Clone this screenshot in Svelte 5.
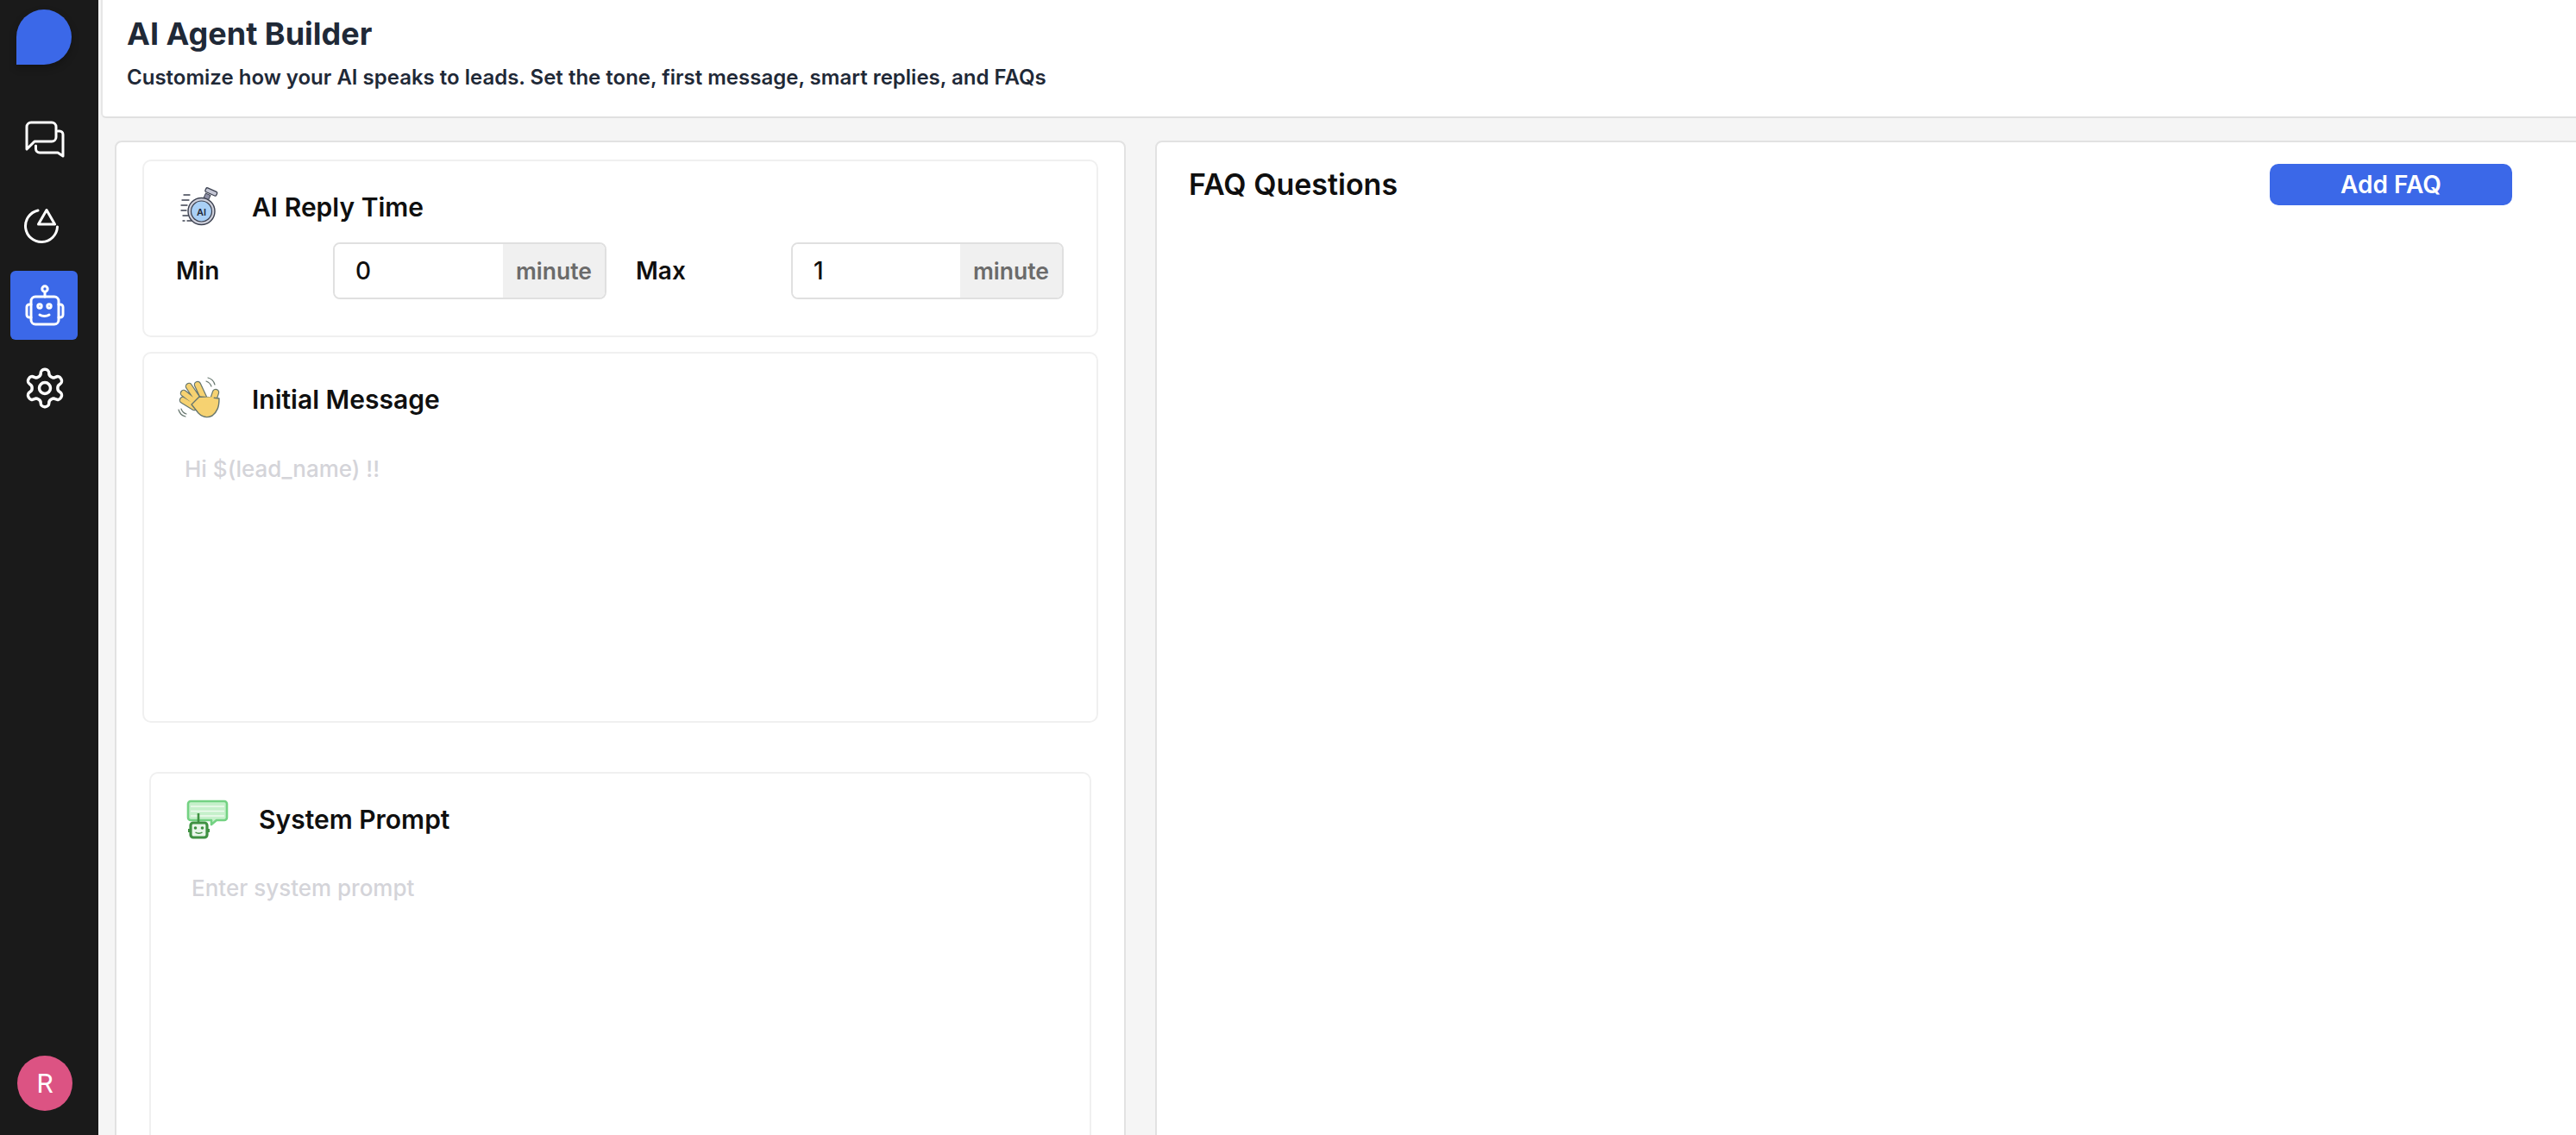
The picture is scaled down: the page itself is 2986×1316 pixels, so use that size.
<script lang="ts">
  let minReply = $state(0)
  let maxReply = $state(1)
  let initialMessage = $state('')
  let systemPrompt = $state('')
</script>

<div class="shell">
  <aside class="sidebar">
    <div class="logo"></div>

    <nav>
      <a class="nav-item" href="#chats" aria-label="Chats">
        <svg viewBox="0 0 56 60" width="56" height="60" class="thick">
          <path d="M7 41V15a5 5 0 0 1 5-5H36a5 5 0 0 1 5 5V27a5 5 0 0 1-5 5H16Z" />
          <path d="M43 20h2a4 4 0 0 1 4 4V49L43 45H22a4.500 4.500 0 0 1-4.500-4.500V37" />
        </svg>
      </a>
      <a class="nav-item" href="#stats" aria-label="Statistics">
        <svg viewBox="0 0 56 60" width="56" height="60" class="thick">
          <path d="M20 16A18.500 18.500 0 1 0 42.500 35" />
          <path d="M30 15.500L39.500 32H20.500Z" />
        </svg>
      </a>
      <a class="nav-item active" href="#agent" aria-label="AI agent">
        <svg viewBox="0 0 56 60" width="56" height="60" class="thick">
          <circle cx="28" cy="11" r="3.200" />
          <path d="M28 14.500V20" />
          <rect x="12" y="20" width="32" height="32" rx="5" />
          <path d="M12 29H10a3 3 0 0 0-3 3v9a3 3 0 0 0 3 3h2" />
          <path d="M44 29h2a3 3 0 0 1 3 3v9a3 3 0 0 1-3 3h-2" />
          <circle cx="22" cy="31" r="2.200" />
          <circle cx="33" cy="31" r="2.200" />
          <path d="M22 41c3 2 8 2 11 0" />
        </svg>
      </a>
      <a class="nav-item" href="#settings" aria-label="Settings">
        <svg viewBox="0 0 24 24" width="52" height="52">
          <path d="M12.22 2h-.44a2 2 0 0 0-2 2v.18a2 2 0 0 1-1 1.73l-.43.25a2 2 0 0 1-2 0l-.15-.08a2 2 0 0 0-2.73.73l-.22.38a2 2 0 0 0 .73 2.73l.15.1a2 2 0 0 1 1 1.72v.51a2 2 0 0 1-1 1.74l-.15.09a2 2 0 0 0-.73 2.73l.22.38a2 2 0 0 0 2.73.73l.15-.08a2 2 0 0 1 2 0l.43.25a2 2 0 0 1 1 1.73V20a2 2 0 0 0 2 2h.44a2 2 0 0 0 2-2v-.18a2 2 0 0 1 1-1.73l.43-.25a2 2 0 0 1 2 0l.15.08a2 2 0 0 0 2.73-.73l.22-.39a2 2 0 0 0-.73-2.73l-.15-.08a2 2 0 0 1-1-1.74v-.5a2 2 0 0 1 1-1.74l.15-.09a2 2 0 0 0 .73-2.73l-.22-.38a2 2 0 0 0-2.73-.73l-.15.08a2 2 0 0 1-2 0l-.43-.25a2 2 0 0 1-1-1.73V4a2 2 0 0 0-2-2z" />
          <circle cx="12" cy="12" r="3" />
        </svg>
      </a>
    </nav>

    <div class="avatar">R</div>
  </aside>

  <main>
    <header class="page-head">
      <h1>AI Agent Builder</h1>
      <p>Customize how your AI speaks to leads. Set the tone, first message, smart replies, and FAQs</p>
    </header>

    <div class="panels">
      <section class="panel left">
        <div class="card">
          <div class="card-head">
            <svg class="art" viewBox="0 0 64 60" width="64" height="60">
              <g fill="none" stroke="#3c4150" stroke-width="1.3" stroke-linecap="round">
                <path d="M13 16h7M11 22h8M10 28h7M10 34h6M12 40h6M12 46h2M17 46h5" />
              </g>
              <rect x="38" y="10" width="14" height="5" rx="1.500" transform="rotate(24 45 12)" fill="#c4c6d4" stroke="#3c4150" stroke-width="1.300" />
              <rect x="37" y="15" width="6" height="6" transform="rotate(24 40 18)" fill="#8e90a6" stroke="#3c4150" stroke-width="1" />
              <circle cx="33.500" cy="35" r="15.500" fill="#cfd1dc" stroke="#3c4150" stroke-width="1.400" />
              <circle cx="33.500" cy="35" r="12" fill="#a9d0f6" stroke="#3c4150" stroke-width="1.200" />
              <text x="33.500" y="39.500" text-anchor="middle" class="art-text">AI</text>
            </svg>
            <h2>AI Reply Time</h2>
          </div>
          <div class="reply-row">
            <span class="field-label">Min</span>
            <div class="input-group first">
              <input type="number" bind:value={minReply} />
              <span class="addon">minute</span>
            </div>
            <span class="field-label">Max</span>
            <div class="input-group">
              <input type="number" bind:value={maxReply} />
              <span class="addon">minute</span>
            </div>
          </div>
        </div>

        <div class="card message">
          <div class="card-head">
            <svg class="art" viewBox="0 0 64 60" width="64" height="60">
              <g fill="none" stroke-linecap="round">
                <g stroke="#66766e" stroke-width="8.500">
                  <path d="M29 13l7 15M19 15l10 15M13 23l14 11M12 31l13 8" />
                  <path d="M50 22l-4 12" />
                </g>
                <g stroke="#f6d271" stroke-width="6">
                  <path d="M29 13l7 15M19 15l10 15M13 23l14 11M12 31l13 8" />
                  <path d="M50 22l-4 12" />
                </g>
              </g>
              <path d="M22 36l9-9 15 1 8 1c0 10-2 15-8 20-6 3-12 1-16-3z" fill="#f6d271" stroke="#66766e" stroke-width="1.400" stroke-linejoin="round" />
              <path d="M25 38l8-10 15-1-2 9z" fill="#f6d271" />
              <g fill="none" stroke="#66766e" stroke-width="1.200" stroke-linecap="round">
                <path d="M39 9c3 1 5 3 6 6M41 5c4 1 7 4 8 8" />
                <path d="M10 41c1 3 3 5 6 6M7 42c1 4 4 7 8 8" />
              </g>
            </svg>
            <h2>Initial Message</h2>
          </div>
          <textarea placeholder="Hi $(lead_name) !!" bind:value={initialMessage}></textarea>
        </div>

        <div class="card prompt">
          <div class="card-head">
            <svg class="art" viewBox="0 0 64 60" width="64" height="60">
              <path d="M13 9h39a3 3 0 0 1 3 3v16a3 3 0 0 1-3 3H43l-6 5v-5H13a3 3 0 0 1-3-3V12a3 3 0 0 1 3-3z" fill="#c6f0cb" stroke="#74d283" stroke-width="2.600" stroke-linejoin="round" />
              <path d="M13 15h39M13 20.500h39M13 26h39" stroke="#effaf0" stroke-width="1.600" />
              <path d="M22 23v11" stroke="#3f9142" stroke-width="2.600" />
              <rect x="13" y="34" width="19" height="17" rx="3" fill="#e9f6ea" stroke="#3f9142" stroke-width="3.200" />
              <path d="M11 41v4M34 41v4" stroke="#3f9142" stroke-width="2" />
              <circle cx="18.500" cy="40" r="1.800" fill="#3f9142" />
              <circle cx="26.500" cy="40" r="1.800" fill="#3f9142" />
              <path d="M18.500 45c2 1.500 6 1.500 8 0" fill="none" stroke="#3f9142" stroke-width="1.500" />
            </svg>
            <h2>System Prompt</h2>
          </div>
          <textarea placeholder="Enter system prompt" bind:value={systemPrompt}></textarea>
        </div>
      </section>

      <section class="panel right">
        <div class="faq-head">
          <h2>FAQ Questions</h2>
          <button type="button">Add FAQ</button>
        </div>
      </section>
    </div>
  </main>
</div>

<style>
  :global(body) {
    margin: 0;
    background: #f5f5f5;
    font-family: Inter, 'Liberation Sans', sans-serif;
  }

  .shell {
    display: flex;
    height: 100vh;
    overflow: hidden;
    background: #f5f5f5;
  }

  .sidebar {
    display: flex;
    flex: 0 0 114px;
    flex-direction: column;
    box-sizing: border-box;
    padding: 11px 0 28px;
    background: #1a1a1a;
  }

  .logo {
    width: 64px;
    height: 64px;
    margin-left: 19px;
    border-radius: 50% 50% 50% 0;
    background: #3b68e8;
    box-shadow: 0 4px 8px rgba(0, 0, 0, 0.25);
  }

  nav {
    display: flex;
    flex-direction: column;
    gap: 16px;
    margin-top: 47px;
    padding-left: 12px;
  }

  .nav-item {
    display: flex;
    width: 78px;
    height: 80px;
    align-items: center;
    justify-content: center;
    padding-left: 2px;
    box-sizing: border-box;
    border-radius: 6px;
  }

  .nav-item.active {
    background: #3b68e8;
  }

  .nav-item svg {
    fill: none;
    stroke: #fff;
    stroke-width: 1.6;
    stroke-linecap: round;
    stroke-linejoin: round;
  }

  .nav-item svg.thick {
    stroke-width: 3;
  }

  .avatar {
    display: flex;
    width: 64px;
    height: 64px;
    align-items: center;
    justify-content: center;
    margin: auto 0 0 20px;
    border-radius: 50%;
    color: #fff;
    background: #dc5383;
    font-family: Roboto, sans-serif;
    font-size: 31px;
  }

  main {
    display: flex;
    flex: 1;
    flex-direction: column;
    min-width: 0;
  }

  .page-head {
    flex: none;
    box-sizing: border-box;
    height: 137px;
    margin-left: 3px;
    padding: 18px 0 0 28px;
    border-bottom: 2px solid #e0e0e0;
    border-left: 2px solid #e6e6e6;
    border-bottom-left-radius: 6px;
    background: #fff;
  }

  h1 {
    margin: 0;
    color: #1f2937;
    font-size: 36px;
    font-weight: 700;
    line-height: 42px;
  }

  .page-head p {
    margin: 14px 0 0;
    color: #1f2937;
    font-size: 24px;
    font-weight: 600;
    line-height: 32px;
  }

  .panels {
    display: flex;
    gap: 34px;
    padding: 26px 0 0 19px;
  }

  .panel {
    flex: none;
    box-sizing: border-box;
    height: 1300px;
    border: 2px solid #e2e2e2;
    border-radius: 8px;
    background: #fff;
  }

  .panel.left {
    width: 1172px;
    padding: 20px 30px;
  }

  .panel.right {
    width: 1700px;
    padding: 25px 125px 0 37px;
  }

  .card {
    box-sizing: border-box;
    border: 2px solid #f0f0f0;
    border-radius: 10px;
    background: #fff;
  }

  .card + .card {
    margin-top: 17px;
  }

  .card.message {
    height: 430px;
  }

  .card.prompt {
    height: 560px;
    margin: 57px 8px 0;
  }

  .card-head {
    display: flex;
    align-items: center;
    gap: 28px;
    padding: 23px 0 0 33px;
  }

  .art {
    flex: none;
  }

  .art-text {
    fill: #23283a;
    font-size: 11px;
    font-weight: 600;
  }

  .card h2 {
    margin: 0;
    color: #0f0f0f;
    font-size: 30px;
    font-weight: 600;
  }

  .reply-row {
    display: grid;
    grid-template-columns: 182px 351px 180px 316px;
    align-items: center;
    padding: 11px 0 42px 37px;
  }

  .input-group.first {
    width: 317px;
  }

  .field-label {
    color: #0f0f0f;
    font-size: 28px;
    font-weight: 600;
  }

  .input-group {
    display: flex;
    box-sizing: border-box;
    height: 66px;
    overflow: hidden;
    border: 2px solid #e0e0e0;
    border-radius: 8px;
  }

  .input-group input {
    flex: 1;
    min-width: 0;
    padding: 0 0 0 24px;
    border: 0;
    outline: none;
    color: #0f0f0f;
    background: #fff;
    font: inherit;
    font-size: 28px;
    font-weight: 500;
    appearance: textfield;
  }

  .addon {
    display: flex;
    flex: 0 0 118px;
    align-items: center;
    justify-content: center;
    color: #6b6b6b;
    background: #f0f0f0;
    font-size: 26.500px;
    font-weight: 600;
  }

  textarea {
    display: block;
    box-sizing: border-box;
    width: calc(100% - 96px);
    margin: 30px 0 0 47px;
    padding: 0;
    border: 0;
    outline: none;
    resize: none;
    color: #0f0f0f;
    font: inherit;
    font-size: 26px;
    font-weight: 500;
    line-height: 40px;
  }

  .message textarea {
    height: 280px;
    margin-top: 31px;
  }

  .prompt textarea {
    height: 400px;
  }

  textarea::placeholder {
    color: #d4d4d9;
    opacity: 1;
  }

  .faq-head {
    display: flex;
    align-items: flex-start;
    justify-content: space-between;
  }

  .faq-head h2 {
    margin: 0;
    color: #0f0f0f;
    font-size: 34px;
    font-weight: 600;
    line-height: 48px;
  }

  .faq-head button {
    width: 281px;
    height: 48px;
    border: 0;
    border-radius: 10px;
    color: #fff;
    background: #3b68e8;
    font: inherit;
    font-size: 28px;
    font-weight: 600;
    cursor: pointer;
  }
</style>
